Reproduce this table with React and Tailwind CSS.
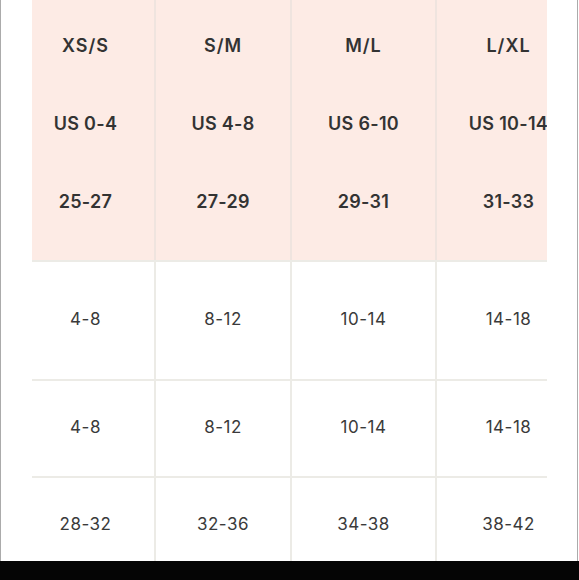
import React from 'react';

const sizes = [
  { label: 'XS/S', us: 'US 0-4', eu: '25-27', rows: ['4-8', '4-8', '28-32'] },
  { label: 'S/M', us: 'US 4-8', eu: '27-29', rows: ['8-12', '8-12', '32-36'] },
  { label: 'M/L', us: 'US 6-10', eu: '29-31', rows: ['10-14', '10-14', '34-38'] },
  { label: 'L/XL', us: 'US 10-14', eu: '31-33', rows: ['14-18', '14-18', '38-42'] },
];

const widths = ['w-[139px]', 'w-[136px]', 'w-[145px]', 'w-[145px]'];
// cell heights, not counting the 2px row border
const rowHeights = ['h-[117px]', 'h-[95px]', 'h-[95px]'];

const SizeTable = () => {
  return (
    <div className="ml-[31px] w-[515px] h-full overflow-hidden">
      <div className="-ml-[15px] w-[565px]">
        {/* Header */}
        <div className="flex bg-[#fdebe5]">
          {sizes.map((s, i) => (
            <div
              key={s.label}
              className={`${widths[i]} shrink-0 h-[260px] pt-[6px] flex flex-col border-r-2 border-[#efe4df] text-[18px] font-semibold text-[#333]`}
            >
              <div className="h-[78px] flex items-center justify-center tracking-[1px]">{s.label}</div>
              <div className="h-[78px] flex items-center justify-center tracking-[0.3px] whitespace-nowrap">{s.us}</div>
              <div className="h-[78px] flex items-center justify-center tracking-[0.3px]">{s.eu}</div>
            </div>
          ))}
        </div>

        {/* Body */}
        {rowHeights.map((h, r) => (
          <div key={r} className="flex border-t-2 border-[#ecebe6]">
            {sizes.map((s, i) => (
              <div
                key={s.label}
                className={`${widths[i]} ${h} shrink-0 pb-[1px] flex items-center justify-center border-r-2 border-[#ecebe6] text-[17px] text-[#3a3a3a] tracking-[0.5px]`}
              >
                {s.rows[r]}
              </div>
            ))}
          </div>
        ))}
      </div>
    </div>
  );
};

export default function App() {
  return (
    <div className="w-[579px] h-[580px] bg-white flex flex-col overflow-hidden" style={{ fontFamily: 'Inter, "Noto Sans", sans-serif' }}>
      <div className="flex-1 min-h-0 w-[578px] border-l border-r border-[#ababab] overflow-hidden">
        <SizeTable />
      </div>
      <div className="h-[19px] bg-[#050505]" />
    </div>
  );
}
